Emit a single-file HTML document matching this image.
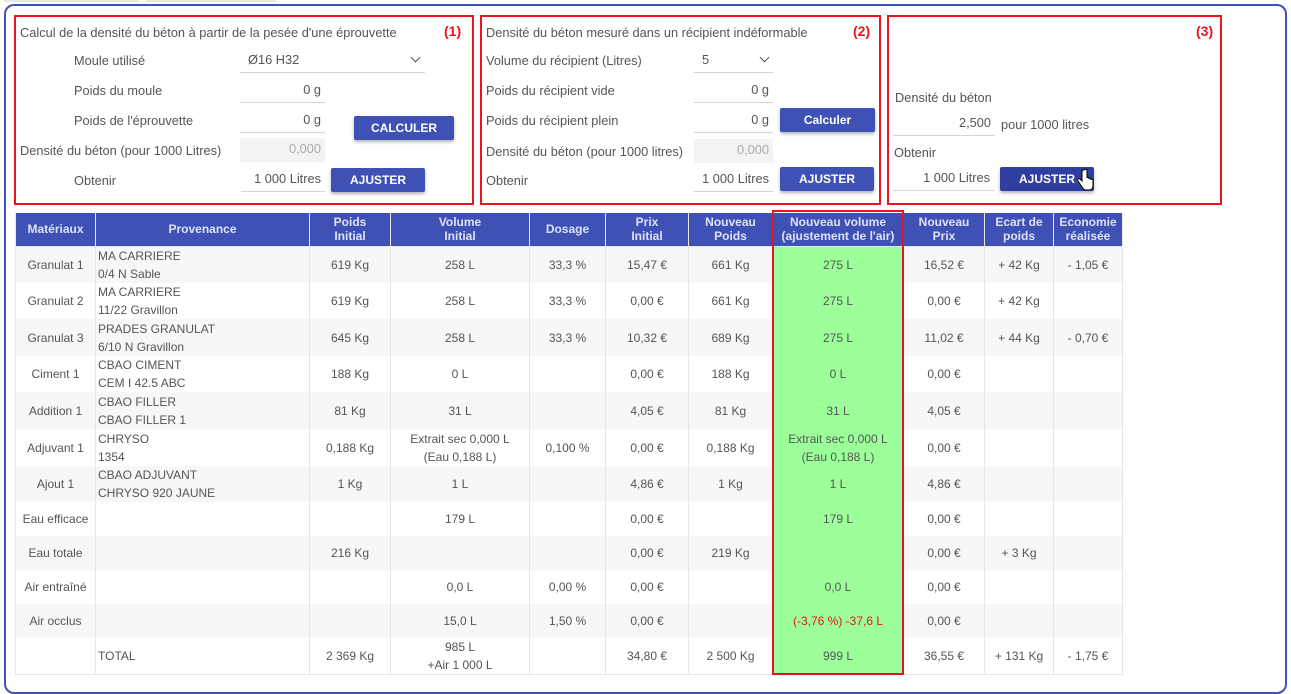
<!DOCTYPE html>
<html><head><meta charset="utf-8">
<style>
*{box-sizing:border-box;margin:0;padding:0}
body{width:1291px;height:691px;background:#fff;font-family:"Liberation Sans",sans-serif;font-size:12px;color:#555;position:relative;overflow:hidden}
.outer{position:absolute;left:4px;top:4px;width:1283px;height:690px;border:2px solid #3f51b5;border-radius:10px}
.tabs{position:absolute;top:0;height:2px;background:#e6e6e6}
.panel{position:absolute;border:2px solid #e8141e;top:15px;height:190px}
.a{position:absolute;white-space:nowrap;font-size:12.8px}
.num{position:absolute;color:#e8141e;font-weight:bold;font-size:14px}
.inp{position:absolute;border-bottom:1px solid #d6d6d6;text-align:right;padding-right:4px;height:24px;line-height:22px;color:#555;font-size:12.8px}
.gray{background:#f3f3f3;border:none;color:#aaa}
.btn{position:absolute;background:#3f51b5;color:#fff;font-weight:bold;font-size:12px;text-align:center;box-shadow:0 2px 3px rgba(0,0,0,.3);border-radius:2px}
table{position:absolute;left:15px;top:213px;border-collapse:collapse;table-layout:fixed}
th{background:#3f51b5;color:#dde2f6;font-weight:bold;font-size:12px;line-height:14px;border:1px solid #e6e6e6;border-top:none;height:33px}
td{border-left:1px solid #e6e6e6;border-right:1px solid #e6e6e6;text-align:center;line-height:18px;color:#555}
tr:nth-child(even) td{background:#f7f7f7}
td.l{text-align:left;padding-left:2px}
td.g{background:#9cff99!important}
tr:last-child td{border-bottom:1px solid #e6e6e6}
.red{color:#e8141e}
.chev{position:absolute;width:7px;height:7px;border-right:1.5px solid #555;border-bottom:1.5px solid #555;transform:rotate(45deg)}
</style></head><body>
<div class="tabs" style="left:4px;width:135px"></div>
<div class="tabs" style="left:146px;width:130px"></div>
<div class="outer"></div>

<div class="panel" style="left:14px;width:460px"></div>
<div class="a" style="left:20px;top:25px">Calcul de la densité du béton à partir de la pesée d'une éprouvette</div>
<div class="num" style="left:444px;top:23px">(1)</div>
<div class="a" style="left:74px;top:53px">Moule utilisé</div>
<div class="inp" style="left:240px;top:49px;width:185px;text-align:left;padding-left:8px">Ø16 H32</div>
<div class="chev" style="left:412px;top:54px"></div>
<div class="a" style="left:74px;top:83px">Poids du moule</div>
<div class="inp" style="left:240px;top:79px;width:85px">0 g</div>
<div class="a" style="left:74px;top:113px">Poids de l'éprouvette</div>
<div class="inp" style="left:240px;top:109px;width:85px">0 g</div>
<div class="btn" style="left:354px;top:116px;width:100px;height:24px;line-height:24px">CALCULER</div>
<div class="a" style="left:20px;top:143px">Densité du béton (pour 1000 Litres)</div>
<div class="inp gray" style="left:240px;top:138px;width:85px">0,000</div>
<div class="a" style="left:74px;top:173px">Obtenir</div>
<div class="inp" style="left:241px;top:168px;width:84px">1 000 Litres</div>
<div class="btn" style="left:331px;top:168px;width:94px;height:24px;line-height:24px">AJUSTER</div>

<div class="panel" style="left:480px;width:401px"></div>
<div class="a" style="left:486px;top:25px">Densité du béton mesuré dans un récipient indéformable</div>
<div class="num" style="left:853px;top:23px">(2)</div>
<div class="a" style="left:486px;top:53px">Volume du récipient (Litres)</div>
<div class="inp" style="left:694px;top:49px;width:79px;text-align:left;padding-left:8px">5</div>
<div class="chev" style="left:761px;top:54px"></div>
<div class="a" style="left:486px;top:83px">Poids du récipient vide</div>
<div class="inp" style="left:694px;top:79px;width:79px">0 g</div>
<div class="a" style="left:486px;top:113px">Poids du récipient plein</div>
<div class="inp" style="left:694px;top:109px;width:79px">0 g</div>
<div class="btn" style="left:780px;top:108px;width:95px;height:24px;line-height:24px">Calculer</div>
<div class="a" style="left:486px;top:144px">Densité du béton (pour 1000 litres)</div>
<div class="inp gray" style="left:694px;top:139px;width:79px">0,000</div>
<div class="a" style="left:486px;top:173px">Obtenir</div>
<div class="inp" style="left:694px;top:168px;width:79px">1 000 Litres</div>
<div class="btn" style="left:780px;top:167px;width:94px;height:24px;line-height:24px">AJUSTER</div>

<div class="panel" style="left:887px;width:335px"></div>
<div class="num" style="left:1196px;top:23px">(3)</div>
<div class="a" style="left:895px;top:90px">Densité du béton</div>
<div class="inp" style="left:893px;top:112px;width:102px">2,500</div>
<div class="a" style="left:1001px;top:117px">pour 1000 litres</div>
<div class="a" style="left:894px;top:145px">Obtenir</div>
<div class="inp" style="left:893px;top:167px;width:101px">1 000 Litres</div>
<div class="btn" style="left:1000px;top:167px;width:94px;height:24px;line-height:24px;background:#303f9f">AJUSTER</div>
<svg class="a" style="left:1078px;top:168px" width="16" height="24" viewBox="0 0 16 24"><path d="M4 2v11l-2-2c-1-1-3 0-2 2l4 6c1 2 2 3 5 3h2c3 0 4-2 4-5v-5c0-1-2-1-2 0v-1c0-1-2-1-2 0v-1c0-1-2-1-2 0V2c0-1-3-1-3 0z" fill="#fff" stroke="#000" stroke-width="1"/></svg>

<table>
<colgroup><col style="width:80px"><col style="width:214px"><col style="width:81px"><col style="width:139px"><col style="width:76px"><col style="width:83px"><col style="width:84px"><col style="width:131px"><col style="width:81px"><col style="width:69px"><col style="width:69px"></colgroup>
<tr><th>Matériaux</th><th>Provenance</th><th>Poids<br>Initial</th><th>Volume<br>Initial</th><th>Dosage</th><th>Prix<br>Initial</th><th>Nouveau<br>Poids</th><th>Nouveau volume<br>(ajustement de l'air)</th><th>Nouveau<br>Prix</th><th>Ecart de<br>poids</th><th>Economie<br>réalisée</th></tr>
<tr style="height:37px"><td>Granulat 1</td><td class="l">MA CARRIERE<br>0/4 N Sable</td><td>619 Kg</td><td>258 L</td><td>33,3 %</td><td>15,47 €</td><td>661 Kg</td><td class="g">275 L</td><td>16,52 €</td><td>+ 42 Kg</td><td>- 1,05 €</td></tr>
<tr style="height:36px"><td>Granulat 2</td><td class="l">MA CARRIERE<br>11/22 Gravillon</td><td>619 Kg</td><td>258 L</td><td>33,3 %</td><td>0,00 €</td><td>661 Kg</td><td class="g">275 L</td><td>0,00 €</td><td>+ 42 Kg</td><td></td></tr>
<tr style="height:37px"><td>Granulat 3</td><td class="l">PRADES GRANULAT<br>6/10 N Gravillon</td><td>645 Kg</td><td>258 L</td><td>33,3 %</td><td>10,32 €</td><td>689 Kg</td><td class="g">275 L</td><td>11,02 €</td><td>+ 44 Kg</td><td>- 0,70 €</td></tr>
<tr style="height:36px"><td>Ciment 1</td><td class="l">CBAO CIMENT<br>CEM I 42.5 ABC</td><td>188 Kg</td><td>0 L</td><td></td><td>0,00 €</td><td>188 Kg</td><td class="g">0 L</td><td>0,00 €</td><td></td><td></td></tr>
<tr style="height:37px"><td>Addition 1</td><td class="l">CBAO FILLER<br>CBAO FILLER 1</td><td>81 Kg</td><td>31 L</td><td></td><td>4,05 €</td><td>81 Kg</td><td class="g">31 L</td><td>4,05 €</td><td></td><td></td></tr>
<tr style="height:37px"><td>Adjuvant 1</td><td class="l">CHRYSO<br>1354</td><td>0,188 Kg</td><td>Extrait sec 0,000 L<br>(Eau 0,188 L)</td><td>0,100 %</td><td>0,00 €</td><td>0,188 Kg</td><td class="g">Extrait sec 0,000 L<br>(Eau 0,188 L)</td><td>0,00 €</td><td></td><td></td></tr>
<tr style="height:36px"><td>Ajout 1</td><td class="l">CBAO ADJUVANT<br>CHRYSO 920 JAUNE</td><td>1 Kg</td><td>1 L</td><td></td><td>4,86 €</td><td>1 Kg</td><td class="g">1 L</td><td>4,86 €</td><td></td><td></td></tr>
<tr style="height:34px"><td>Eau efficace</td><td></td><td></td><td>179 L</td><td></td><td>0,00 €</td><td></td><td class="g">179 L</td><td>0,00 €</td><td></td><td></td></tr>
<tr style="height:34px"><td>Eau totale</td><td></td><td>216 Kg</td><td></td><td></td><td>0,00 €</td><td>219 Kg</td><td class="g"></td><td>0,00 €</td><td>+ 3 Kg</td><td></td></tr>
<tr style="height:34px"><td>Air entraîné</td><td></td><td></td><td>0,0 L</td><td>0,00 %</td><td>0,00 €</td><td></td><td class="g">0,0 L</td><td>0,00 €</td><td></td><td></td></tr>
<tr style="height:34px"><td>Air occlus</td><td></td><td></td><td>15,0 L</td><td>1,50 %</td><td>0,00 €</td><td></td><td class="g red">(-3,76 %) -37,6 L</td><td>0,00 €</td><td></td><td></td></tr>
<tr style="height:36px"><td></td><td class="l">TOTAL</td><td>2 369 Kg</td><td>985 L<br>+Air 1 000 L</td><td></td><td>34,80 €</td><td>2 500 Kg</td><td class="g">999 L</td><td>36,55 €</td><td>+ 131 Kg</td><td>- 1,75 €</td></tr>
</table>
<div style="position:absolute;left:772px;top:210px;width:132px;height:465px;border:2px solid #e8141e"></div>
</body></html>
